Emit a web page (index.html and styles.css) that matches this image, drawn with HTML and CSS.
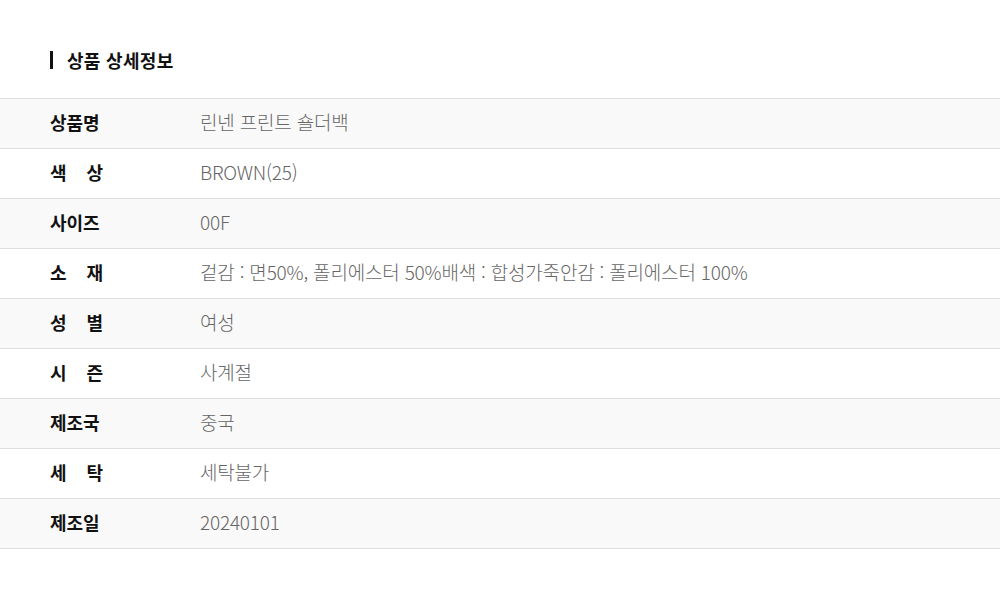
FILE: index.html
```html
<!DOCTYPE html>
<html lang="ko">
<head>
    <meta charset="UTF-8">
    <meta name="viewport" content="width=device-width, initial-scale=1.0">
    <title>상품 상세정보</title>
    <link rel="stylesheet" href="styles.css">
</head>
<body>
<div class="detail">
    <h3 class="detail-title">상품 상세정보</h3>

    <table class="info-table">
        <tr><th><span class="label">상품명</span></th><td>린넨 프린트 숄더백</td></tr>
        <tr><th><span class="label">색 상</span></th><td>BROWN(25)</td></tr>
        <tr><th><span class="label">사이즈</span></th><td>00F</td></tr>
        <tr><th><span class="label">소 재</span></th><td>겉감 : 면50%, 폴리에스터 50%배색 : 합성가죽안감 : 폴리에스터 100%</td></tr>
        <tr><th><span class="label">성 별</span></th><td>여성</td></tr>
        <tr><th><span class="label">시 즌</span></th><td>사계절</td></tr>
        <tr><th><span class="label">제조국</span></th><td>중국</td></tr>
        <tr><th><span class="label">세 탁</span></th><td>세탁불가</td></tr>
        <tr><th><span class="label">제조일</span></th><td>20240101</td></tr>
    </table>
</div>
</body>
</html>
```

FILE: styles.css
```css
body {
    margin: 0;
    padding: 0;
    background: #fff;
    color: #111;
    font-family: "Noto Sans CJK KR", "Noto Sans", sans-serif;
}
.detail {
    padding-top: 51px;
}
.detail-title {
    display: flex;
    align-items: center;
    height: 18px;
    margin: 0 0 29px 50px;
    padding-left: 14px;
    border-left: 3px solid #111;
    font-size: 18px;
    line-height: 18px;
    font-weight: bold;
    letter-spacing: 0.3px;
}
.info-table {
    width: 100%;
    border-collapse: collapse;
    border-top: 1px solid #ddd;
}
.info-table tr {
    border-bottom: 1px solid #ddd;
}
.info-table tr:nth-child(odd) {
    background: #f9f9f9;
}
.info-table th,
.info-table td {
    height: 45px;
    padding: 0 0 4px;
    font-size: 18px;
    text-align: left;
    vertical-align: middle;
}
.info-table th {
    width: 150px;
    padding-left: 50px;
    font-weight: bold;
    color: #111;
}
.info-table td {
    color: #666;
    font-size: 19px;
    font-weight: 300;
    letter-spacing: -0.2px;
}
.label {
    display: block;
    width: 53px;
    text-align: justify;
    text-align-last: justify;
}
```
